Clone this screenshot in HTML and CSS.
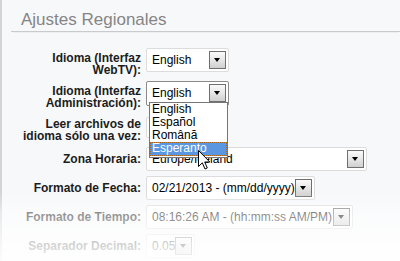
FILE: index.html
```html
<!DOCTYPE html>
<html>
<head>
<meta charset="utf-8">
<link rel="stylesheet" href="styles.css">
</head>
<body>
<div class="page">
  <div class="title"><h1>Ajustes Regionales</h1></div>
  <div class="form">
    <div class="label two">Idioma (Interfaz<br>WebTV):</div>
    <div class="field">
      <div class="select w83"><span>English</span><i class="btn"></i></div>
    </div>

    <div class="label two">Idioma (Interfaz<br>Administración):</div>
    <div class="field">
      <div class="select w83 open"><span>English</span><i class="btn"></i></div>
      <ul class="list">
        <li>English</li>
        <li>Español</li>
        <li>Română</li>
        <li class="hl">Esperanto</li>
      </ul>
      <svg class="cursor" width="13" height="21" viewBox="0 0 13 21">
        <path d="M0.5 0.5 L0.5 16.5 L4.3 12.8 L7 19 L9.3 18 L6.7 12 L11.8 12 Z" fill="#fff" stroke="#000" stroke-width="1" stroke-linejoin="miter"/>
      </svg>
    </div>

    <div class="label two">Leer archivos de<br>idioma sólo una vez:</div>
    <div class="field">
      <div class="select w81 small"></div>
    </div>

    <div class="label">Zona Horaria:</div>
    <div class="field">
      <div class="select w221"><span>Europe/Iceland</span><i class="btn"></i></div>
    </div>

    <div class="label">Formato de Fecha:</div>
    <div class="field">
      <div class="select w169"><span>02/21/2013 - (mm/dd/yyyy)</span><i class="btn"></i></div>
    </div>

    <div class="label">Formato de Tiempo:</div>
    <div class="field">
      <div class="select w207"><span>08:16:26 AM - (hh:mm:ss AM/PM)</span><i class="btn"></i></div>
    </div>

    <div class="label">Separador Decimal:</div>
    <div class="field">
      <div class="select w49"><span>0.05</span><i class="btn"></i></div>
    </div>
  </div>
  <div class="fade"></div>
</div>
</body>
</html>
```

FILE: styles.css
```css
html, body {
  margin: 0;
  padding: 0;
}
body {
  width: 400px;
  height: 261px;
  overflow: hidden;
  background: #f7f8fa;
  font-family: "Liberation Sans", Arial, sans-serif;
}
.page {
  position: relative;
  height: 261px;
  border-left: 2px solid #d3d4d6;
  box-sizing: border-box;
}
.title {
  margin-left: 9px;
  padding: 10px 0 1px 10px;
  border-bottom: 1px solid #c9cacc;
  box-shadow: 0 3px 0 -2px #eceef1;
}
.title h1 {
  margin: 0;
  font-size: 17px;
  line-height: 20px;
  font-weight: normal;
  color: #858585;
}
.form {
  display: grid;
  grid-template-columns: 139px auto;
  column-gap: 5px;
  row-gap: 5px;
  margin-top: 16px;
}
.label {
  font-size: 12px;
  line-height: 12px;
  font-weight: bold;
  color: #1c1c1c;
  text-align: right;
  align-self: center;
}
.label.two {
  align-self: start;
  padding-top: 4px;
  height: 24px;
  line-height: 12px;
}
.field {
  position: relative;
  display: flex;
  align-items: flex-start;
}
.select {
  position: relative;
  height: 24px;
  box-sizing: border-box;
  border: 1px solid #dcdcdc;
  border-radius: 2px;
  background: #fff;
  font-size: 12px;
  line-height: 22px;
  color: #000;
  padding-left: 5px;
}
.select.open {
  border-color: #8a8a8a;
  height: 25px;
}
.select.small {
  margin-top: 3px;
  height: 21px;
}
.btn {
  position: absolute;
  right: 2px;
  top: 2px;
  width: 17px;
  height: 18px;
  box-sizing: border-box;
  border: 1px solid #6f6f6f;
  background: linear-gradient(#fafafa, #e9e9e9 45%, #cfcfcf);
}
.btn::after {
  content: "";
  position: absolute;
  left: 4px;
  top: 6px;
  border-left: 3.5px solid transparent;
  border-right: 3.5px solid transparent;
  border-top: 4px solid #000;
}
.w83 { width: 83px; }
.w81 { width: 81px; }
.w221 { width: 221px; }
.w169 { width: 169px; }
.w207 { width: 207px; }
.w49 { width: 49px; }

.list {
  position: absolute;
  left: 3px;
  top: 21px;
  width: 79px;
  margin: 0;
  padding: 0;
  list-style: none;
  background: #fff;
  border: 1px solid #767676;
  box-sizing: border-box;
  font-size: 12px;
  line-height: 13px;
  z-index: 2;
}
.list li {
  padding-left: 2px;
  height: 13px;
  color: #000;
}
.list li.hl {
  height: 14px;
  line-height: 13px;
  background: #5b97e0;
  color: #fff;
  outline: 1px dotted #a8661c;
  outline-offset: -1px;
  margin-bottom: 1px;
}
.cursor {
  position: absolute;
  left: 52px;
  top: 69px;
  z-index: 3;
}
.fade {
  position: absolute;
  left: -2px;
  right: 0;
  top: 0;
  bottom: 0;
  pointer-events: none;
  z-index: 5;
  background: linear-gradient(to bottom,
    rgba(255,255,255,0) 192px,
    rgba(255,255,255,0.5) 212px,
    rgba(255,255,255,0.8) 245px,
    rgba(255,255,255,0.9) 261px);
}
```
